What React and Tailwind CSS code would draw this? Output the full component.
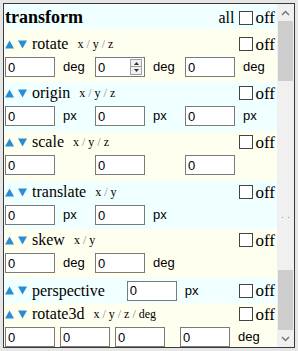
const serif = "font-['Liberation_Serif',serif]";
const sans = "font-['Liberation_Sans',Arial,sans-serif]";

function Arrows() {
  return (
    <span className="mr-[5px] flex items-center gap-[4px]">
      <svg width="9" height="9" viewBox="0 0 9 9">
        <path d="M4.5 0.5L9 8.5H0Z" fill="#2a8dd4" />
      </svg>
      <svg width="9" height="9" viewBox="0 0 9 9">
        <path d="M0 0.5H9L4.5 8.5Z" fill="#2a8dd4" />
      </svg>
    </span>
  );
}

function Off() {
  return (
    <span className="ml-auto flex items-center pr-[2px]">
      <span className="mr-[2px] h-[14px] w-[14px] border border-[#444] bg-white" />
      <span className={`${serif} text-[17px] leading-none`}>off</span>
    </span>
  );
}

function Axes({ text }) {
  const parts = text.split("/");
  return (
    <span className={`${serif} ml-[9px] text-[12px]`}>
      {parts.map((p, i) => (
        <span key={i}>
          {i > 0 && <span className="text-[#888]"> / </span>}
          {p}
        </span>
      ))}
    </span>
  );
}

function Title({ name, axes }) {
  return (
    <div className="flex h-[20px] items-center">
      <Arrows />
      <span className={`${serif} text-[16px]`}>{name}</span>
      {axes && <Axes text={axes} />}
      <Off />
    </div>
  );
}

function Field({ spin }) {
  return (
    <span className="relative flex">
      <input
        readOnly
        value="0"
        className={`${sans} h-[20px] w-[50px] border border-[#7a7a7a] bg-white pl-[2px] text-[13px] text-black outline-none`}
      />
      {spin && (
        <span className="absolute right-[3px] top-[2px] flex h-[16px] w-[12px] flex-col">
          <span className="flex h-[8px] items-center justify-center border border-[#a0a0a0] bg-[#f0f0f0]">
            <svg width="5" height="3" viewBox="0 0 5 3">
              <path d="M2.5 0L5 3H0Z" fill="#333" />
            </svg>
          </span>
          <span className="flex h-[8px] items-center justify-center border border-t-0 border-[#a0a0a0] bg-[#f0f0f0]">
            <svg width="5" height="3" viewBox="0 0 5 3">
              <path d="M0 0H5L2.5 3Z" fill="#333" />
            </svg>
          </span>
        </span>
      )}
    </span>
  );
}

function Unit({ text }) {
  return <span className={`${sans} w-[40px] pl-[8px] text-[13px]`}>{text}</span>;
}

function Section({ bg, h, pt = "pt-[1px]", name, axes, children }) {
  return (
    <div className={`${bg} ${h} ${pt} pl-[1px]`}>
      <Title name={name} axes={axes} />
      <div className="mt-[3px] flex items-center">{children}</div>
    </div>
  );
}

function Scrollbar() {
  return (
    <div className="flex w-[17px] flex-col bg-[#f0f0f0]">
      <div className="flex h-[17px] items-center justify-center">
        <svg width="9" height="6" viewBox="0 0 9 6">
          <path d="M1 5L4.5 1.5L8 5" stroke="#777" strokeWidth="1.5" fill="none" />
        </svg>
      </div>
      <div className="mx-px h-[60px] bg-[#cdcdcd]" />
      <div className="flex flex-1 justify-center gap-[5px] pt-[136px]">
        <span className="h-px w-px bg-[#999]" />
        <span className="h-px w-px bg-[#999]" />
      </div>
      <div className="mx-px h-[60px] bg-[#cdcdcd]" />
      <div className="flex h-[17px] items-center justify-center">
        <svg width="9" height="6" viewBox="0 0 9 6">
          <path d="M1 1L4.5 4.5L8 1" stroke="#777" strokeWidth="1.5" fill="none" />
        </svg>
      </div>
    </div>
  );
}

export default function App() {
  const cyan = "bg-[#f0ffff]";
  const ivory = "bg-[#fffff0]";
  return (
    <div className="h-[351px] w-[298px] bg-[#e6e6e6] p-[3px] text-black">
      <div className="flex h-full border border-[#3a3a3a] bg-white">
        <div className="flex-1 overflow-hidden">
          <div className={`${cyan} flex h-[25px] items-end pb-[3px] pl-[1px]`}>
            <span className={`${serif} text-[18px] font-bold leading-none`}>transform</span>
            <span className={`${serif} ml-auto mr-[5px] text-[16px] leading-none`}>all</span>
            <span className="flex items-center pr-[2px]">
              <span className="mr-[2px] h-[14px] w-[14px] border border-[#444] bg-white" />
              <span className={`${serif} text-[17px] leading-none`}>off</span>
            </span>
          </div>

          <Section bg={ivory} h="h-[53px]" pt="pt-[5px]" name="rotate" axes="x/y/z">
            <Field />
            <Unit text="deg" />
            <Field spin />
            <Unit text="deg" />
            <Field />
            <Unit text="deg" />
          </Section>

          <Section bg={cyan} h="h-[49px]" name="origin" axes="x/y/z">
            <Field />
            <Unit text="px" />
            <Field />
            <Unit text="px" />
            <Field />
            <Unit text="px" />
          </Section>

          <Section bg={ivory} h="h-[50px]" name="scale" axes="x/y/z">
            <Field />
            <Unit text="" />
            <Field />
            <Unit text="" />
            <Field />
          </Section>

          <Section bg={cyan} h="h-[48px]" name="translate" axes="x/y">
            <Field />
            <Unit text="px" />
            <Field />
            <Unit text="px" />
          </Section>

          <Section bg={ivory} h="h-[49px]" name="skew" axes="x/y">
            <Field />
            <Unit text="deg" />
            <Field />
            <Unit text="deg" />
          </Section>

          <div className={`${cyan} flex h-[25px] items-center pl-[1px]`}>
            <Arrows />
            <span className={`${serif} text-[16px]`}>perspective</span>
            <span className="ml-[22px]">
              <Field />
            </span>
            <Unit text="px" />
            <Off />
          </div>

          <div className={`${ivory} h-[60px] pl-[1px] pt-[1px]`}>
            <Title name="rotate3d" axes="x/y/z/deg" />
            <div className="mt-[3px] flex items-center gap-[5px]">
              <Field />
              <Field />
              <Field />
              <span className="ml-[10px] flex items-center">
                <Field />
                <Unit text="deg" />
              </span>
            </div>
          </div>
        </div>
        <Scrollbar />
      </div>
    </div>
  );
}
